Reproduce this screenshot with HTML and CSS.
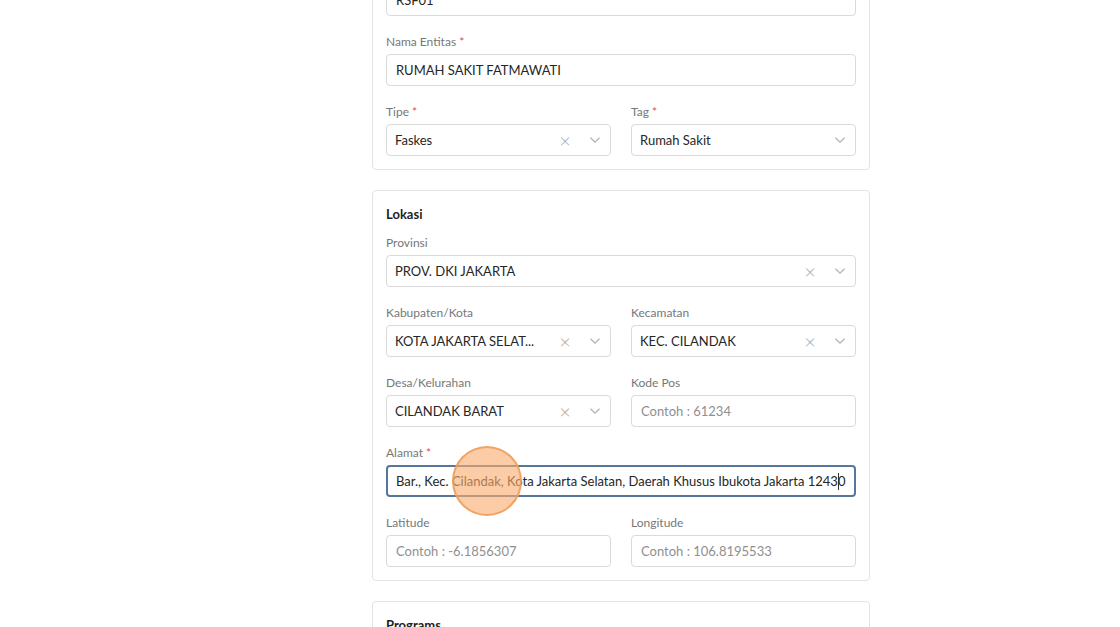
FILE: index.html
```html
<!DOCTYPE html>
<html lang="en">
<head>
  <meta charset="utf-8">
  <title>Entitas</title>
  <link rel="stylesheet" href="styles.css">
</head>
<body>
  <div class="page">
    <div class="card">
      <h3>Informasi Entitas</h3>
      <div class="field">
        <label>Kode Entitas <span class="req">*</span></label>
        <div class="input">RSF01</div>
      </div>
      <div class="field">
        <label>Nama Entitas <span class="req">*</span></label>
        <div class="input">RUMAH SAKIT FATMAWATI</div>
      </div>
      <div class="row">
        <div class="field">
          <label>Tipe <span class="req">*</span></label>
          <div class="select">
            <span class="value">Faskes</span>
            <span class="clear">&times;</span>
            <span class="chevron"><svg width="12" height="8" viewBox="0 0 12 8"><path d="M1.5 1.8 6 6.2l4.5-4.4" fill="none" stroke="#b3b3b3" stroke-width="1.3"/></svg></span>
          </div>
        </div>
        <div class="field">
          <label>Tag <span class="req">*</span></label>
          <div class="select">
            <span class="value">Rumah Sakit</span>
            <span class="chevron"><svg width="12" height="8" viewBox="0 0 12 8"><path d="M1.5 1.8 6 6.2l4.5-4.4" fill="none" stroke="#b3b3b3" stroke-width="1.3"/></svg></span>
          </div>
        </div>
      </div>
    </div>

    <div class="card">
      <h3>Lokasi</h3>
      <div class="field">
        <label>Provinsi</label>
        <div class="select">
          <span class="value">PROV. DKI JAKARTA</span>
          <span class="clear">&times;</span>
          <span class="chevron"><svg width="12" height="8" viewBox="0 0 12 8"><path d="M1.5 1.8 6 6.2l4.5-4.4" fill="none" stroke="#b3b3b3" stroke-width="1.3"/></svg></span>
        </div>
      </div>
      <div class="row">
        <div class="field">
          <label>Kabupaten/Kota</label>
          <div class="select">
            <span class="value">KOTA JAKARTA SELAT...</span>
            <span class="clear">&times;</span>
            <span class="chevron"><svg width="12" height="8" viewBox="0 0 12 8"><path d="M1.5 1.8 6 6.2l4.5-4.4" fill="none" stroke="#b3b3b3" stroke-width="1.3"/></svg></span>
          </div>
        </div>
        <div class="field">
          <label>Kecamatan</label>
          <div class="select">
            <span class="value">KEC. CILANDAK</span>
            <span class="clear">&times;</span>
            <span class="chevron"><svg width="12" height="8" viewBox="0 0 12 8"><path d="M1.5 1.8 6 6.2l4.5-4.4" fill="none" stroke="#b3b3b3" stroke-width="1.3"/></svg></span>
          </div>
        </div>
      </div>
      <div class="row">
        <div class="field">
          <label>Desa/Kelurahan</label>
          <div class="select">
            <span class="value">CILANDAK BARAT</span>
            <span class="clear">&times;</span>
            <span class="chevron"><svg width="12" height="8" viewBox="0 0 12 8"><path d="M1.5 1.8 6 6.2l4.5-4.4" fill="none" stroke="#b3b3b3" stroke-width="1.3"/></svg></span>
          </div>
        </div>
        <div class="field">
          <label>Kode Pos</label>
          <div class="input placeholder">Contoh : 61234</div>
        </div>
      </div>
      <div class="field">
        <label>Alamat <span class="req">*</span></label>
        <div class="input focused">Bar., Kec. Cilandak, Kota Jakarta Selatan, Daerah Khusus Ibukota Jakarta 1243<span class="caret"></span>0</div>
      </div>
      <div class="row">
        <div class="field">
          <label>Latitude</label>
          <div class="input placeholder">Contoh : -6.1856307</div>
        </div>
        <div class="field">
          <label>Longitude</label>
          <div class="input placeholder">Contoh : 106.8195533</div>
        </div>
      </div>
    </div>

    <div class="card">
      <h3>Programs</h3>
      <div class="field">
        <label>Program</label>
        <div class="input"></div>
      </div>
    </div>
  </div>
  <div class="click-dot"></div>
</body>
</html>
```

FILE: styles.css
```css
body {
  margin: 0;
  background: #fff;
  font-family: Lato, "Noto Sans", sans-serif;
  color: #333;
  overflow: hidden;
}
.page {
  width: 498px;
  margin: -81px 0 0 372px;
  display: flex;
  flex-direction: column;
  gap: 20px;
}
.card {
  border: 1px solid #e3e3e3;
  border-radius: 4px;
  padding: 13px;
  display: flex;
  flex-direction: column;
  gap: 16px;
}
.card h3 {
  margin: 0 0 -7px;
  font-size: 13px;
  font-weight: 700;
  line-height: 20px;
  color: #1f1f1f;
}
.row {
  display: grid;
  grid-template-columns: 1fr 1fr;
  gap: 20px;
}
.field label {
  display: block;
  font-size: 12px;
  line-height: 19px;
  color: #777;
  margin-bottom: 3px;
}
.req {
  color: #d9534f;
}
.input, .select {
  height: 32px;
  box-sizing: border-box;
  border: 1px solid #dadada;
  border-radius: 4px;
  font-size: 13px;
  line-height: 30px;
  color: #262626;
  white-space: nowrap;
  overflow: hidden;
}
.input {
  padding: 0 9px;
}
.input.placeholder {
  color: #8f8f8f;
}
.input.focused {
  border: 2px solid #56779b;
  line-height: 28px;
  padding: 0 8px;
}
.caret {
  display: inline-block;
  width: 1px;
  height: 17px;
  background: #333;
  vertical-align: -4px;
  margin: 0 -1px 0 0;
}
.select {
  display: flex;
  align-items: center;
  padding-left: 8px;
}
.select .value {
  flex: 1;
}
.select .clear {
  width: 30px;
  text-align: center;
  color: #aaa;
  font-size: 20px;
  font-weight: 300;
}
.select .chevron {
  width: 30px;
  display: flex;
  justify-content: center;
  align-items: center;
}
.click-dot {
  position: absolute;
  left: 452px;
  top: 446px;
  width: 66px;
  height: 66px;
  border-radius: 50%;
  background: rgba(248, 172, 110, 0.62);
  border: 2px solid rgba(238, 156, 88, 0.85);
}
```
